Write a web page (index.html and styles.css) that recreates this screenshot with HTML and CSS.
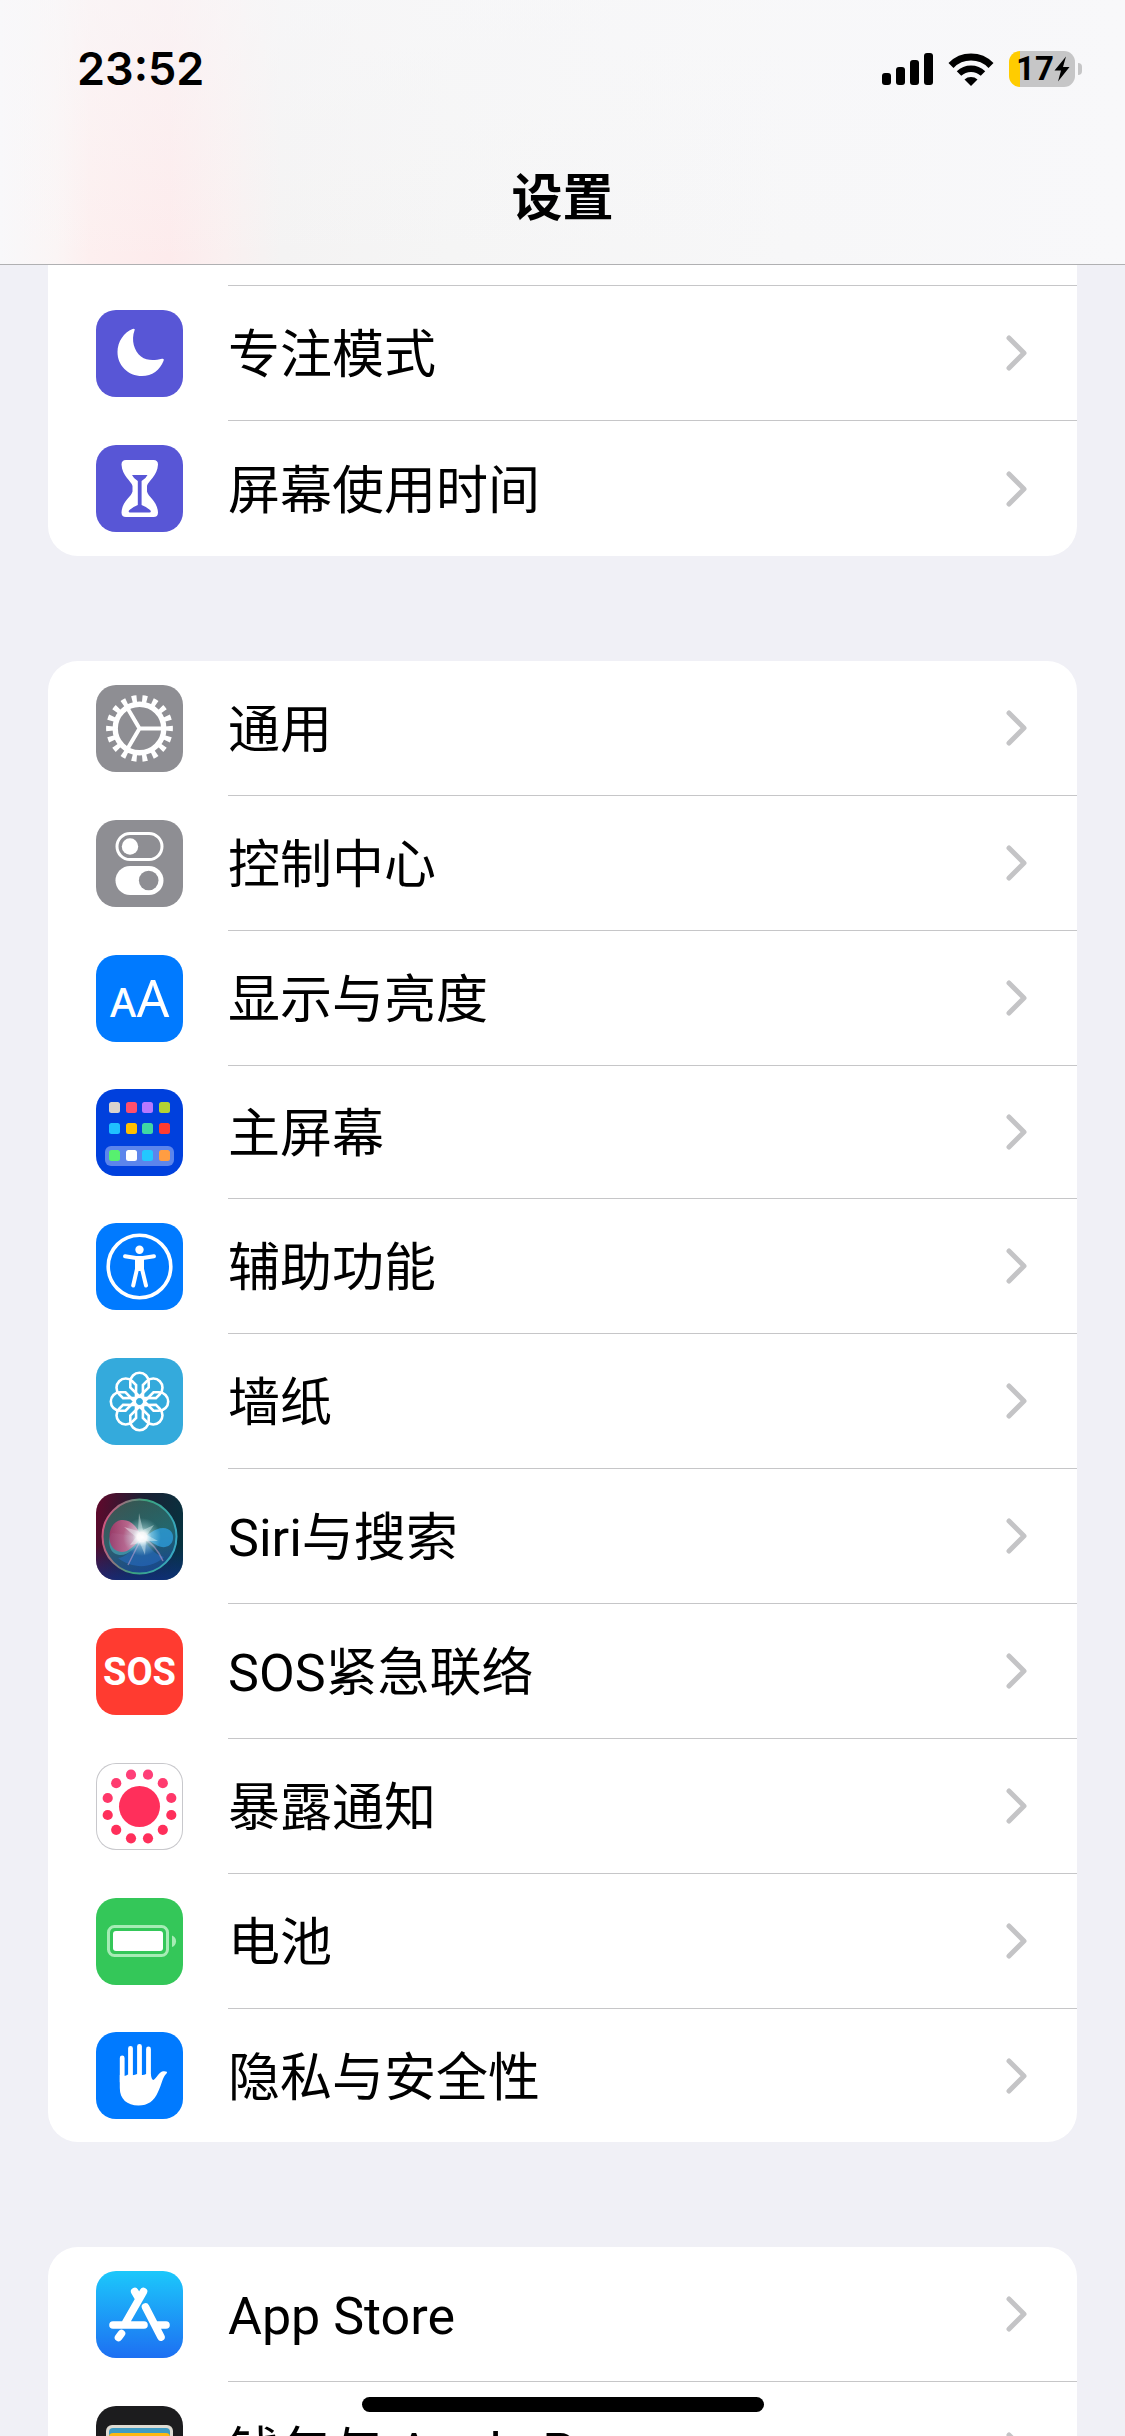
FILE: index.html
```html
<!DOCTYPE html>
<html lang="zh-CN">
<head>
    <meta charset="UTF-8">
    <meta name="viewport" content="width=device-width, initial-scale=1.0">
    <title>设置</title>
    <link rel="stylesheet" href="styles.css">
</head>
<body>

<!-- shared shapes -->
<svg class="defs" width="0" height="0" aria-hidden="true">
    <symbol id="chevron" viewBox="0 0 21 36">
        <path d="M3 3L18 18L3 33" fill="none" stroke="#c4c4c6" stroke-width="5" stroke-linecap="round" stroke-linejoin="round"/>
    </symbol>
</svg>

<div class="screen">
    <header class="header">
        <div class="status-bar">
            <span class="time">23:52</span>
            <div class="status-icons">
                <svg class="signal" width="51" height="32" viewBox="0 0 51 32">
                    <rect x="0" y="20" width="9" height="12" rx="3"/>
                    <rect x="14" y="14" width="9" height="18" rx="3"/>
                    <rect x="28" y="7" width="9" height="25" rx="3"/>
                    <rect x="42" y="0" width="9" height="32" rx="3"/>
                </svg>
                <svg class="wifi" width="46" height="33" viewBox="0 0 46 33">
                    <path d="M3 12.500A28 28 0 0 1 43 12.500" fill="none" stroke="#000" stroke-width="7"/>
                    <path d="M11 20.500A17.500 17.500 0 0 1 35 20.500" fill="none" stroke="#000" stroke-width="6.500"/>
                    <path d="M23 33L16.500 26.500A10 10 0 0 1 29.500 26.500Z"/>
                </svg>
                <div class="battery">
                    <span class="battery-level">17</span>
                    <svg width="16" height="26" viewBox="0 0 16 26">
                        <path d="M12 0.500L0.500 14.500H7L4 25.500L15.500 11H9Z"/>
                    </svg>
                </div>
            </div>
        </div>
        <h1>设置</h1>
    </header>

    <main>
        <section class="group group-first">
            <div class="row-end"></div>
            <a class="row" href="#">
                <svg class="icon purple" viewBox="0 0 87 87">
                    <path fill="#fff" d="M38.500 20.500C35 30 38 41 45 46.500C51 51 58.500 50.600 66 48.700Q68.600 48.300 67.600 50.700C64 60 56 66 46 66C32 66 21.500 55.500 21.500 42C21.500 31.500 28 22.500 36.500 19Q39.600 18 38.500 20.500Z"/>
                </svg>
                <div class="row-body"><span>专注模式</span><svg class="chevron"><use href="#chevron"/></svg></div>
            </a>
            <a class="row" href="#">
                <svg class="icon purple" viewBox="0 0 87 87">
                    <path fill="#fff" d="M30 15H57.500Q62 15 62 19.500C61.500 31 52 36 51 41V46.500C52 52 61.500 56 62 67.500Q62 72 57.500 72H30Q25.500 72 25.500 67.500C26 56 35.500 52 36.500 46.500V41C35.500 36 26 31 25.500 19.500Q25.500 15 30 15Z"/>
                    <path fill="#5856d6" d="M36 30H51.500Q50 33.500 45.600 36V60Q51 62 54.500 65.500Q55.500 67.500 53.500 67.500H34Q32 67.500 33 65.500Q36.500 62 41.800 60V36Q37.500 33.500 36 30Z"/>
                </svg>
                <div class="row-body"><span>屏幕使用时间</span><svg class="chevron"><use href="#chevron"/></svg></div>
            </a>
        </section>

        <section class="group">
            <a class="row" href="#">
                <svg class="icon gray" viewBox="0 0 87 87">
                    <g fill="none" stroke="#fff">
                        <circle cx="43.500" cy="43.500" r="24.300" stroke-width="5.400"/>
                        <circle cx="43.500" cy="43.500" r="29.700" stroke-width="7.400" pathLength="18" stroke-dasharray=".46 .54" stroke-dashoffset=".23"/>
                        <path d="M66 43.500H43.500L32 24M43.500 43.500L32 63" stroke-width="4"/>
                    </g>
                </svg>
                <div class="row-body"><span>通用</span><svg class="chevron"><use href="#chevron"/></svg></div>
            </a>
            <a class="row" href="#">
                <svg class="icon gray" viewBox="0 0 87 87">
                    <rect x="21" y="13.500" width="45" height="26" rx="13" fill="none" stroke="#fff" stroke-width="3"/>
                    <circle cx="34" cy="26.500" r="8.200" fill="#fff"/>
                    <rect x="19.500" y="46" width="48" height="29" rx="14.500" fill="#fff"/>
                    <circle cx="52.700" cy="60.500" r="9.800" fill="#8e8e93"/>
                </svg>
                <div class="row-body"><span>控制中心</span><svg class="chevron"><use href="#chevron"/></svg></div>
            </a>
            <a class="row" href="#">
                <svg class="icon blue" viewBox="0 0 87 87">
                    <text class="letter-small" x="27" y="62">A</text>
                    <text class="letter-large" x="57" y="62">A</text>
                </svg>
                <div class="row-body"><span>显示与亮度</span><svg class="chevron"><use href="#chevron"/></svg></div>
            </a>
            <a class="row row-short" href="#">
                <svg class="icon navy" viewBox="0 0 87 87">
                    <rect x="13" y="13" width="11" height="11" rx="2.500" fill="#d9d3cd"/>
                    <rect x="30" y="13" width="11" height="11" rx="2.500" fill="#ff4f6b"/>
                    <rect x="46" y="13" width="11" height="11" rx="2.500" fill="#b678ff"/>
                    <rect x="63" y="13" width="11" height="11" rx="2.500" fill="#b4d334"/>
                    <rect x="13" y="34" width="11" height="11" rx="2.500" fill="#1fc0ff"/>
                    <rect x="30" y="34" width="11" height="11" rx="2.500" fill="#ffbf00"/>
                    <rect x="46" y="34" width="11" height="11" rx="2.500" fill="#3fd8a4"/>
                    <rect x="63" y="34" width="11" height="11" rx="2.500" fill="#ff3b30"/>
                    <rect x="9" y="57" width="69" height="20" rx="6" fill="#5c85ec"/>
                    <rect x="13" y="61" width="11" height="11" rx="2.500" fill="#57f06f"/>
                    <rect x="30" y="61" width="11" height="11" rx="2.500" fill="#fff"/>
                    <rect x="46" y="61" width="11" height="11" rx="2.500" fill="#22c8ff"/>
                    <rect x="63" y="61" width="11" height="11" rx="2.500" fill="#ff9d42"/>
                </svg>
                <div class="row-body"><span>主屏幕</span><svg class="chevron"><use href="#chevron"/></svg></div>
            </a>
            <a class="row" href="#">
                <svg class="icon blue" viewBox="0 0 87 87">
                    <circle cx="43.500" cy="43.500" r="31.300" fill="none" stroke="#fff" stroke-width="3.600"/>
                    <circle cx="43.500" cy="26.800" r="4.200" fill="#fff"/>
                    <path d="M29 33.300L40 35H47L58 33.300" fill="none" stroke="#fff" stroke-width="4" stroke-linecap="round"/>
                    <path d="M41 36H46V46L50 62.500M41 36V46L37.200 62.500" fill="none" stroke="#fff" stroke-width="4" stroke-linecap="round" stroke-linejoin="round"/>
                    <path d="M39 34H48V48H39Z" fill="#fff"/>
                </svg>
                <div class="row-body"><span>辅助功能</span><svg class="chevron"><use href="#chevron"/></svg></div>
            </a>
            <a class="row" href="#">
                <svg class="icon cyan" viewBox="0 0 87 87">
                    <defs>
                        <path id="petal" d="M0 -5L-9.200 -14V-19.500A9.200 9.200 0 0 1 9.200 -19.500V-14Z"/>
                    </defs>
                    <g transform="translate(43.500 43.500)" fill="none" stroke="#fff" stroke-width="2.600">
                        <use href="#petal"/>
                        <use href="#petal" transform="rotate(45)"/>
                        <use href="#petal" transform="rotate(90)"/>
                        <use href="#petal" transform="rotate(135)"/>
                        <use href="#petal" transform="rotate(180)"/>
                        <use href="#petal" transform="rotate(225)"/>
                        <use href="#petal" transform="rotate(270)"/>
                        <use href="#petal" transform="rotate(315)"/>
                        <circle r="4.800"/>
                    </g>
                </svg>
                <div class="row-body"><span>墙纸</span><svg class="chevron"><use href="#chevron"/></svg></div>
            </a>
            <a class="row" href="#">
                <svg class="icon" viewBox="0 0 87 87">
                    <defs>
                        <linearGradient id="siri-bg" x1="0" y1="0.300" x2="1" y2="0.500">
                            <stop offset="0" stop-color="#5c0a2c"/>
                            <stop offset=".45" stop-color="#1d1f33"/>
                            <stop offset="1" stop-color="#07323f"/>
                        </linearGradient>
                        <linearGradient id="siri-floor" x1="0" y1="0" x2="0" y2="1">
                            <stop offset=".6" stop-color="#10308c" stop-opacity="0"/>
                            <stop offset="1" stop-color="#10308c" stop-opacity=".7"/>
                        </linearGradient>
                        <linearGradient id="siri-orb" x1=".3" y1="0" x2=".6" y2="1">
                            <stop offset="0" stop-color="#3c6a5c"/>
                            <stop offset=".5" stop-color="#2b7a7c"/>
                            <stop offset="1" stop-color="#1b4f9c"/>
                        </linearGradient>
                        <linearGradient id="siri-rim" x1="0" y1=".4" x2="1" y2=".6">
                            <stop offset="0" stop-color="#d0557e"/>
                            <stop offset=".5" stop-color="#3aa37e"/>
                            <stop offset="1" stop-color="#37a8c4"/>
                        </linearGradient>
                        <linearGradient id="siri-pink" x1="0" y1="0" x2="1" y2="0">
                            <stop offset="0" stop-color="#a83468"/>
                            <stop offset="1" stop-color="#ee8fb4"/>
                        </linearGradient>
                        <radialGradient id="siri-glow">
                            <stop offset="0" stop-color="#fff"/>
                            <stop offset=".25" stop-color="#fff" stop-opacity=".9"/>
                            <stop offset=".5" stop-color="#dff" stop-opacity=".4"/>
                            <stop offset="1" stop-color="#bff" stop-opacity="0"/>
                        </radialGradient>
                    </defs>
                    <rect width="87" height="87" fill="url(#siri-bg)"/>
                    <rect width="87" height="87" fill="url(#siri-floor)"/>
                    <circle cx="43.500" cy="43.500" r="37" fill="url(#siri-orb)" fill-opacity=".75" stroke="url(#siri-rim)" stroke-width="2"/>
                    <path fill="#2870cc" fill-opacity=".5" d="M46 44C36 58 30 64 22 65C36 76 56 76 68 64C60 62 54 56 46 44Z"/>
                    <path fill="#56bfd0" fill-opacity=".5" d="M46 44C38 58 28 66 18 60C12 56 12 44 16 40Z"/>
                    <path fill="url(#siri-pink)" fill-opacity=".85" d="M46 44C40 32 34 26 25 27C15 29 12 40 14 49C17 60 28 61 34 56C40 52 42 48 46 44Z"/>
                    <path fill="#2e9fe0" fill-opacity=".75" d="M46 44C54 42 58 35 67 35C74 35 78 40 77 46C76 53 69 56 62 53C56 50 52 46 46 44Z"/>
                    <path d="M46 44Q60 52 67 68M46 44L32 72" fill="none" stroke="#d4a5d6" stroke-opacity=".5" stroke-width="1.500"/>
                    <path fill="#fff" fill-opacity=".4" d="M43 20L47 37L58 32L51 42L62 48L50 48L49 62L44 50L34 52L40 44L28 34L42 38Z"/>
                    <circle cx="46" cy="44" r="19" fill="url(#siri-glow)"/>
                </svg>
                <div class="row-body"><span>Siri与搜索</span><svg class="chevron"><use href="#chevron"/></svg></div>
            </a>
            <a class="row" href="#">
                <svg class="icon red" viewBox="0 0 87 87">
                    <text class="sos" x="43.500" y="57">SOS</text>
                </svg>
                <div class="row-body"><span>SOS紧急联络</span><svg class="chevron"><use href="#chevron"/></svg></div>
            </a>
            <a class="row" href="#">
                <svg class="icon outlined" viewBox="0 0 87 87">
                    <g fill="#ff2f5b">
                        <circle cx="43.500" cy="43.500" r="20.500"/>
                        <circle cx="52" cy="11.700" r="5.100" fill="#ff3f78"/>
                        <circle cx="66.800" cy="20.200" r="5.100" fill="#ff3b6f"/>
                        <circle cx="75.300" cy="35" r="5.100" fill="#ff3769"/>
                        <circle cx="75.300" cy="52" r="5.100"/>
                        <circle cx="66.800" cy="66.800" r="5.100"/>
                        <circle cx="52" cy="75.300" r="5.100"/>
                        <circle cx="35" cy="75.300" r="5.100"/>
                        <circle cx="20.200" cy="66.800" r="5.100"/>
                        <circle cx="11.700" cy="52" r="5.100"/>
                        <circle cx="11.700" cy="35" r="5.100" fill="#ff3769"/>
                        <circle cx="20.200" cy="20.200" r="5.100" fill="#ff3b6f"/>
                        <circle cx="35" cy="11.700" r="5.100" fill="#ff3f78"/>
                    </g>
                </svg>
                <div class="row-body"><span>暴露通知</span><svg class="chevron"><use href="#chevron"/></svg></div>
            </a>
            <a class="row" href="#">
                <svg class="icon green" viewBox="0 0 87 87">
                    <rect x="12.500" y="28.500" width="59" height="29" rx="6" fill="none" stroke="#a6ecb5" stroke-width="3"/>
                    <rect x="17" y="33" width="50" height="20" rx="3" fill="#fff"/>
                    <path d="M76 37.500Q80 39 80 43.200Q80 47.500 76 49Z" fill="#a6ecb5"/>
                </svg>
                <div class="row-body"><span>电池</span><svg class="chevron"><use href="#chevron"/></svg></div>
            </a>
            <a class="row row-short" href="#">
                <svg class="icon blue" viewBox="0 0 87 87">
                    <path d="M26.200 26V50M34.500 16.300V50M43.500 14.300V50M52.500 17V50" fill="none" stroke="#fff" stroke-width="4.800" stroke-linecap="round"/>
                    <path fill="#fff" d="M23.800 43Q29 45 32 42.500Q38 44 41 42Q47 44 50 42H54.900Q55.200 47.500 57.500 48C60 47 63 40 67 39.300Q72.500 39 70.500 41.500C66.500 45 66 52 62 60C58 69 52 73.500 42.500 73.500C31 73.500 23.800 67 23.800 56Z"/>
                </svg>
                <div class="row-body"><span>隐私与安全性</span><svg class="chevron"><use href="#chevron"/></svg></div>
            </a>
        </section>

        <section class="group">
            <a class="row" href="#">
                <svg class="icon store" viewBox="0 0 87 87">
                    <path d="M47.500 20.500L29.500 52M38.700 20.500L42.500 27M17 54H48M60 54H70M49.500 36L65 66M25.500 62.500L22.500 66.500" fill="none" stroke="#fff" stroke-width="7.600" stroke-linecap="round"/>
                </svg>
                <div class="row-body"><span>App Store</span><svg class="chevron"><use href="#chevron"/></svg></div>
            </a>
            <a class="row" href="#">
                <svg class="icon black" viewBox="0 0 87 87">
                    <rect x="10" y="19" width="67" height="56" rx="6" fill="#dedbd3"/>
                    <rect x="13" y="22" width="61" height="30" rx="4" fill="#3f9bc4"/>
                    <rect x="13" y="27" width="61" height="30" rx="4" fill="#fcb813"/>
                    <rect x="13" y="35" width="61" height="30" rx="4" fill="#3eb45c"/>
                    <path d="M10 45H30Q34 53 43.500 53Q53 53 57 45H77V69Q77 75 71 75H16Q10 75 10 69Z" fill="#dedbd3"/>
                </svg>
                <div class="row-body"><span>钱包与 Apple Pay</span><svg class="chevron"><use href="#chevron"/></svg></div>
            </a>
        </section>
    </main>

    <div class="home-indicator"></div>
</div>

</body>
</html>
```

FILE: styles.css
```css
* {
    box-sizing: border-box;
}
body {
    margin: 0;
    font-family: Roboto, "Noto Sans CJK SC", sans-serif;
    background-color: #f0f0f6;
    color: #000000;
}
.defs {
    position: absolute;
}
.screen {
    position: relative;
    height: 100vh;
    overflow: hidden;
}

/* Header */
.header {
    height: 265px;
    border-bottom: 1px solid #b0b0b2;
    background:
        linear-gradient(rgba(248, 248, 250, 0.6), rgba(248, 248, 250, 0)),
        linear-gradient(90deg, #f8f8fa 0%, #fbf5f5 5%, #fdefef 8%, #fdebec 15%, #faf0f0 20%, #f4f3f3 25%, #f5f5f5 40%, #f7f7f8 70%, #f8f8fa 100%);
}
.status-bar {
    display: flex;
    justify-content: space-between;
    align-items: center;
    height: 138px;
    padding: 0 50px 0 77px;
}
.time {
    font-family: Inter, sans-serif;
    font-size: 45px;
    font-weight: 600;
    line-height: 54px;
}
.status-icons {
    display: flex;
    align-items: center;
    gap: 15px;
}
.battery {
    position: relative;
    display: flex;
    align-items: center;
    justify-content: center;
    width: 66px;
    height: 36px;
    padding-left: 2px;
    border-radius: 11px;
    background: linear-gradient(90deg, #ffcc00 11px, #c6c6c7 11px);
}
.battery::after {
    content: "";
    position: absolute;
    left: 69px;
    top: 12px;
    width: 4px;
    height: 12px;
    border-radius: 0 4px 4px 0;
    background-color: #c6c6c7;
}
.battery-level {
    font-size: 33px;
    font-weight: 700;
    line-height: 36px;
}
h1 {
    margin: 0;
    padding-top: 25px;
    font-size: 51px;
    font-weight: 600;
    line-height: 72px;
    text-align: center;
}

/* Settings list */
.group {
    margin: 0 48px 105px;
    border-radius: 30px;
    background-color: #ffffff;
    overflow: hidden;
}
.group-first {
    border-radius: 0 0 30px 30px;
}
.row-end {
    height: 21px;
    margin-left: 180px;
    border-bottom: 1px solid #c6c6c8;
}
.row {
    display: flex;
    align-items: center;
    gap: 45px;
    height: 135px;
    padding-left: 48px;
    color: inherit;
    text-decoration: none;
}
.row-short {
    height: 133px;
}
.row-body {
    flex: 1;
    display: flex;
    align-items: center;
    justify-content: space-between;
    height: 100%;
    padding-right: 50px;
    border-bottom: 1px solid #c6c6c8;
    font-size: 52px;
    line-height: 72px;
}
.row-body span {
    padding-top: 6px;
}
.row:last-child .row-body {
    border-bottom: none;
}
.chevron {
    width: 21px;
    height: 36px;
}

/* Icons */
.icon {
    flex: none;
    width: 87px;
    height: 87px;
    border-radius: 20px;
}
.purple {
    background-color: #5856d6;
}
.gray {
    background-color: #8e8e93;
}
.blue {
    background-color: #007aff;
}
.navy {
    background-color: #0040dd;
}
.cyan {
    background-color: #34aadc;
}
.red {
    background-color: #ff3b30;
}
.green {
    background-color: #34c759;
}
.black {
    background-color: #1c1c1e;
}
.outlined {
    box-shadow: inset 0 0 0 1px #c8c8cc;
}
.store {
    background: linear-gradient(#1cc8fb, #1d6ff2);
}
.letter-small,
.letter-large,
.sos {
    fill: #ffffff;
    text-anchor: middle;
}
.letter-small {
    font-family: "Noto Sans", sans-serif;
    font-size: 40px;
    font-weight: 500;
}
.letter-large {
    font-family: "Noto Sans", sans-serif;
    font-size: 51px;
}
.sos {
    font-size: 38px;
    font-weight: 700;
}

.home-indicator {
    position: absolute;
    left: 50%;
    bottom: 24px;
    width: 402px;
    height: 15px;
    border-radius: 8px;
    background-color: #000000;
    transform: translateX(-50%);
}
```
